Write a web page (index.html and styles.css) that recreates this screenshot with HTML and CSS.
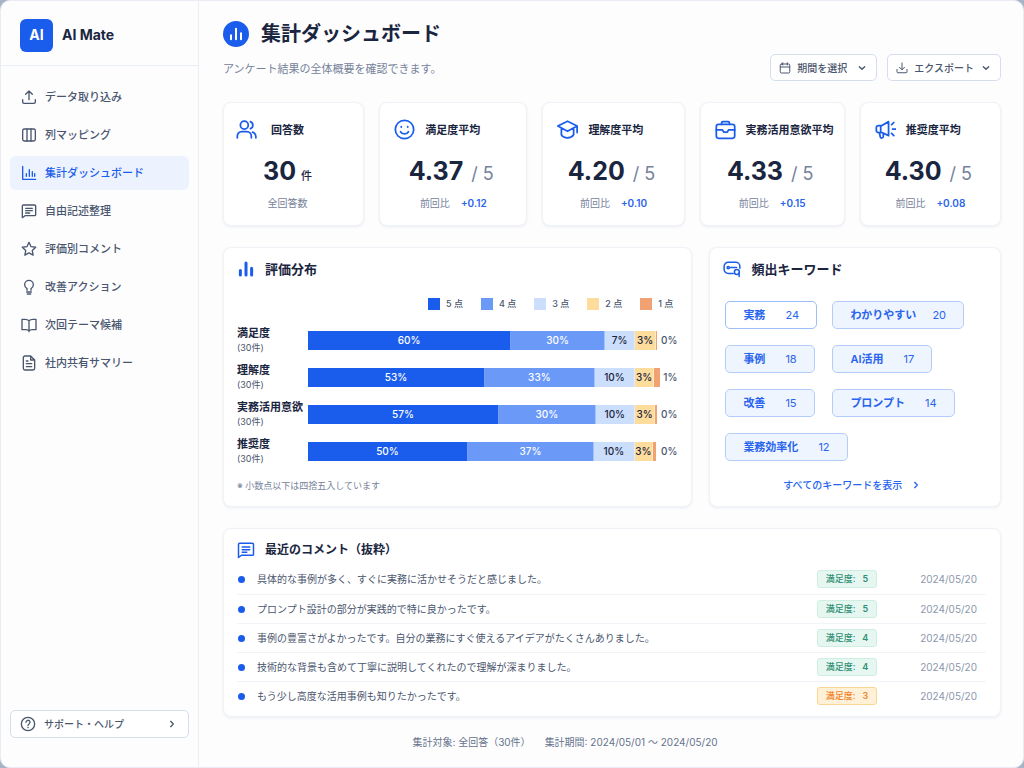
FILE: index.html
```html
<!DOCTYPE html>
<html lang="ja">
<head>
<meta charset="utf-8">
<meta name="viewport" content="width=device-width, initial-scale=1">
<title>AI Mate - 集計ダッシュボード</title>
<link rel="stylesheet" href="styles.css">
</head>
<body>
<svg class="sprite" aria-hidden="true">
  <symbol id="i-upload" viewBox="0 0 24 24"><path d="M12 16V3M7 8l5-5 5 5M2.500 16v3.500a2 2 0 0 0 2 2h15a2 2 0 0 0 2-2V16"/></symbol>
  <symbol id="i-columns" viewBox="0 0 24 24"><rect x="2.500" y="3" width="19" height="18" rx="2.500"/><path d="M9 3v18M15 3v18"/></symbol>
  <symbol id="i-chart" viewBox="0 0 24 24"><path d="M2.500 2v19.500H22M8 17v-4M12.500 17V7M17 17v-7M20.500 17v-4"/></symbol>
  <symbol id="i-message" viewBox="0 0 24 24"><path d="M2 22V4.500A1.500 1.500 0 0 1 3.500 3h17A1.500 1.500 0 0 1 22 4.500v13a1.500 1.500 0 0 1-1.500 1.500H6zM7 8h10M7 11.500h10M7 15h6"/></symbol>
  <symbol id="i-star" viewBox="0 0 24 24"><path d="m12 2 3.100 6.500 7 .900-5.200 4.900 1.300 7-6.200-3.400-6.200 3.400 1.300-7L1.900 9.400l7-.900z"/></symbol>
  <symbol id="i-bulb" viewBox="0 0 24 24"><path d="M9 17v-2.500c-2-1.300-3.500-3.300-3.500-6a6.500 6.500 0 0 1 13 0c0 2.700-1.500 4.700-3.500 6V17M8.500 19.500h7M9.500 22.500h5"/></symbol>
  <symbol id="i-book" viewBox="0 0 24 24"><path d="M12 5.500C10.500 4 8.500 3.500 6 3.500H1.500V19H7c2.500 0 4 .500 5 2 1-1.500 2.500-2 5-2h5.500V3.500H18c-2.500 0-4.500.500-6 2zM12 5.500V22"/></symbol>
  <symbol id="i-file" viewBox="0 0 24 24"><path d="M14.500 1.500H6A2.500 2.500 0 0 0 3.500 4v16A2.500 2.500 0 0 0 6 22.500h12a2.500 2.500 0 0 0 2.500-2.500V7.500zM14.500 1.500v6h6M8 9h2.500M8 13h8M8 17.500h8"/></symbol>
  <symbol id="i-help" viewBox="0 0 24 24"><circle cx="12" cy="12" r="10"/><path d="M9 9.500a3 3 0 1 1 4.500 2.500c-1 .600-1.500 1.100-1.500 2.200M12 17.200v.300"/></symbol>
  <symbol id="i-right" viewBox="0 0 24 24"><path d="m8 4 8 8-8 8"/></symbol>
  <symbol id="i-down" viewBox="0 0 24 24"><path d="m4 8 8 8 8-8"/></symbol>
  <symbol id="i-bars" viewBox="0 0 24 24"><path d="M4.500 20v-6M12 20V4M19.500 20v-9"/></symbol>
  <symbol id="i-calendar" viewBox="0 0 24 24"><rect x="2.500" y="4" width="19" height="18" rx="2.500"/><path d="M2.500 10h19M7.500 1.500V6M16.500 1.500V6"/></symbol>
  <symbol id="i-download" viewBox="0 0 24 24"><path d="M12 2v13M7 10.500l5 5 5-5M2 15v4.500a2 2 0 0 0 2 2h16a2 2 0 0 0 2-2V15"/></symbol>
  <symbol id="i-users" viewBox="0 0 24 24"><circle cx="9.500" cy="7" r="4.500"/><path d="M1.500 21.500v-2a5 5 0 0 1 5-5h6a5 5 0 0 1 5 5v2M16.500 3a4.300 4.300 0 0 1 0 8M19 15c2.300.800 3.700 2.600 3.700 5v1.500"/></symbol>
  <symbol id="i-smile" viewBox="0 0 24 24"><circle cx="12" cy="12" r="10.500"/><path d="M7.500 14.500c1 1.700 2.600 2.600 4.500 2.600s3.500-.900 4.500-2.600M8.300 8.800v.400M15.700 8.800v.400"/></symbol>
  <symbol id="i-cap" viewBox="0 0 24 24"><path d="M12 2.500 1 8l11 6 11-6zM23 8v7.500M5 11v7c1.500 2.500 4 3.500 7 3.500s5.500-1 7-3.500v-7"/></symbol>
  <symbol id="i-case" viewBox="0 0 24 24"><rect x="1.500" y="6" width="21" height="16" rx="2.500"/><path d="M7.500 6V4.500A1.500 1.500 0 0 1 9 3h6a1.500 1.500 0 0 1 1.500 1.500V6M1.500 12.500h7l1.500 2.500h4l1.500-2.500h7"/></symbol>
  <symbol id="i-horn" viewBox="0 0 24 24"><path d="M15.500 3v16L8 15.500H4A2.500 2.500 0 0 1 1.500 13v-3A2.500 2.500 0 0 1 4 7.500h4zM6.500 8v7M5 15.500l1 5a1.800 1.800 0 0 0 3.500-.500v-4M19 6.500 21.500 4M20 11.500h3.500M19 16.500l2.500 2.500"/></symbol>
  <symbol id="i-key" viewBox="0 0 24 24"><path d="M13.500 18H7a5.500 5.500 0 0 1-5.500-5.500V8.500A5.500 5.500 0 0 1 7 3h10a5.500 5.500 0 0 1 5.500 5.500V11"/><circle cx="7" cy="10" r="1.500"/><path d="M9 10h9"/><circle cx="18.500" cy="16" r="3.300"/><path d="M21.500 17v5"/></symbol>
</svg>

<div class="app">
  <aside class="sidebar">
    <div class="brand"><span class="brand__logo">AI</span><span>AI Mate</span></div>
    <nav class="nav" aria-label="メインメニュー">
      <a class="nav__item" href="#import"><svg class="icon"><use href="#i-upload"/></svg>データ取り込み</a>
      <a class="nav__item" href="#mapping"><svg class="icon"><use href="#i-columns"/></svg>列マッピング</a>
      <a class="nav__item nav__item--active" href="#dashboard" aria-current="page"><svg class="icon"><use href="#i-chart"/></svg>集計ダッシュボード</a>
      <a class="nav__item" href="#free"><svg class="icon"><use href="#i-message"/></svg>自由記述整理</a>
      <a class="nav__item" href="#ratings"><svg class="icon"><use href="#i-star"/></svg>評価別コメント</a>
      <a class="nav__item" href="#actions"><svg class="icon"><use href="#i-bulb"/></svg>改善アクション</a>
      <a class="nav__item" href="#themes"><svg class="icon"><use href="#i-book"/></svg>次回テーマ候補</a>
      <a class="nav__item" href="#summary"><svg class="icon"><use href="#i-file"/></svg>社内共有サマリー</a>
    </nav>
    <button class="support" type="button"><svg class="icon"><use href="#i-help"/></svg><span class="support__text">サポート・ヘルプ</span><svg class="icon icon--chevron"><use href="#i-right"/></svg></button>
  </aside>

  <main class="main" id="dashboard">
    <header class="header">
      <div class="header__text">
        <h1 class="title"><span class="title__badge"><svg class="icon icon--title"><use href="#i-bars"/></svg></span>集計ダッシュボード</h1>
        <p class="subtitle">アンケート結果の全体概要を確認できます。</p>
      </div>
      <div class="actions">
        <label class="control"><svg class="icon icon--small"><use href="#i-calendar"/></svg><select class="control__select" aria-label="期間"><option>期間を選択</option></select><svg class="icon icon--chevron"><use href="#i-down"/></svg></label>
        <button class="control" type="button"><svg class="icon icon--small"><use href="#i-download"/></svg><span>エクスポート</span><svg class="icon icon--chevron"><use href="#i-down"/></svg></button>
      </div>
    </header>

    <section class="kpis" aria-label="指標">
      <article class="card kpi kpi--count">
        <h2 class="kpi__head"><svg class="icon icon--large"><use href="#i-users"/></svg>回答数</h2>
        <p class="kpi__value">30<span class="kpi__unit">件</span></p>
        <p class="kpi__note">全回答数</p>
      </article>
      <article class="card kpi">
        <h2 class="kpi__head"><svg class="icon icon--large"><use href="#i-smile"/></svg>満足度平均</h2>
        <p class="kpi__value">4.37<span class="kpi__max">/ 5</span></p>
        <p class="kpi__note">前回比<span class="kpi__delta">+0.12</span></p>
      </article>
      <article class="card kpi">
        <h2 class="kpi__head"><svg class="icon icon--large"><use href="#i-cap"/></svg>理解度平均</h2>
        <p class="kpi__value">4.20<span class="kpi__max">/ 5</span></p>
        <p class="kpi__note">前回比<span class="kpi__delta">+0.10</span></p>
      </article>
      <article class="card kpi">
        <h2 class="kpi__head"><svg class="icon icon--large"><use href="#i-case"/></svg>実務活用意欲平均</h2>
        <p class="kpi__value">4.33<span class="kpi__max">/ 5</span></p>
        <p class="kpi__note">前回比<span class="kpi__delta">+0.15</span></p>
      </article>
      <article class="card kpi">
        <h2 class="kpi__head"><svg class="icon icon--large"><use href="#i-horn"/></svg>推奨度平均</h2>
        <p class="kpi__value">4.30<span class="kpi__max">/ 5</span></p>
        <p class="kpi__note">前回比<span class="kpi__delta">+0.08</span></p>
      </article>
    </section>

    <div class="panels">
      <section class="card panel">
        <h2 class="panel__title"><svg class="icon icon--panel icon--bold"><use href="#i-bars"/></svg>評価分布</h2>
        <ul class="legend">
          <li class="legend__item"><span class="swatch s5"></span>5 点</li>
          <li class="legend__item"><span class="swatch s4"></span>4 点</li>
          <li class="legend__item"><span class="swatch s3"></span>3 点</li>
          <li class="legend__item"><span class="swatch s2"></span>2 点</li>
          <li class="legend__item"><span class="swatch s1"></span>1 点</li>
        </ul>
        <div class="chart">
          <div class="row">
            <div class="row__label">満足度<span class="row__count">(30件)</span></div>
            <div class="track"><span class="seg s5" style="width:57.6%">60%</span><span class="seg s4" style="width:26.8%">30%</span><span class="seg s3" style="width:8.4%">7%</span><span class="seg s2" style="width:6%">3%</span><span class="seg s1" style="width:.3%"></span></div>
            <span class="row__end">0%</span>
          </div>
          <div class="row">
            <div class="row__label">理解度<span class="row__count">(30件)</span></div>
            <div class="track"><span class="seg s5" style="width:50.2%">53%</span><span class="seg s4" style="width:31.2%">33%</span><span class="seg s3" style="width:11.4%">10%</span><span class="seg s2" style="width:5.500%">3%</span><span class="seg s1" style="width:1.700%"></span></div>
            <span class="row__end">1%</span>
          </div>
          <div class="row">
            <div class="row__label">実務活用意欲<span class="row__count">(30件)</span></div>
            <div class="track"><span class="seg s5" style="width:54.2%">57%</span><span class="seg s4" style="width:27.4%">30%</span><span class="seg s3" style="width:11.2%">10%</span><span class="seg s2" style="width:5.800%">3%</span><span class="seg s1" style="width:.5%"></span></div>
            <span class="row__end">0%</span>
          </div>
          <div class="row">
            <div class="row__label">推奨度<span class="row__count">(30件)</span></div>
            <div class="track"><span class="seg s5" style="width:45.4%">50%</span><span class="seg s4" style="width:35.8%">37%</span><span class="seg s3" style="width:11.500%">10%</span><span class="seg s2" style="width:5.200%">3%</span><span class="seg s1" style="width:.9%"></span></div>
            <span class="row__end">0%</span>
          </div>
        </div>
        <p class="footnote">※ 小数点以下は四捨五入しています</p>
      </section>

      <section class="card panel">
        <h2 class="panel__title"><svg class="icon icon--panel"><use href="#i-key"/></svg>頻出キーワード</h2>
        <div class="keywords">
          <button class="keyword keyword--selected" type="button" aria-pressed="true">実務<span class="keyword__count">24</span></button>
          <button class="keyword keyword--tight" type="button">わかりやすい<span class="keyword__count">20</span></button>
          <button class="keyword" type="button">事例<span class="keyword__count">18</span></button>
          <button class="keyword" type="button">AI活用<span class="keyword__count">17</span></button>
          <button class="keyword" type="button">改善<span class="keyword__count">15</span></button>
          <button class="keyword" type="button">プロンプト<span class="keyword__count">14</span></button>
          <button class="keyword keyword--wide" type="button">業務効率化<span class="keyword__count">12</span></button>
        </div>
        <a class="more" href="#keywords">すべてのキーワードを表示<svg class="icon icon--chevron"><use href="#i-right"/></svg></a>
      </section>
    </div>

    <section class="card comments">
      <h2 class="panel__title panel__title--compact"><svg class="icon icon--panel"><use href="#i-message"/></svg>最近のコメント（抜粋）</h2>
      <ul class="comments__list">
        <li class="comment"><span class="comment__text">具体的な事例が多く、すぐに実務に活かせそうだと感じました。</span><span class="score">満足度:<b class="score__num">5</b></span><time class="comment__date" datetime="2024-05-20">2024/05/20</time></li>
        <li class="comment"><span class="comment__text">プロンプト設計の部分が実践的で特に良かったです。</span><span class="score">満足度:<b class="score__num">5</b></span><time class="comment__date" datetime="2024-05-20">2024/05/20</time></li>
        <li class="comment"><span class="comment__text">事例の豊富さがよかったです。自分の業務にすぐ使えるアイデアがたくさんありました。</span><span class="score">満足度:<b class="score__num">4</b></span><time class="comment__date" datetime="2024-05-20">2024/05/20</time></li>
        <li class="comment"><span class="comment__text">技術的な背景も含めて丁寧に説明してくれたので理解が深まりました。</span><span class="score">満足度:<b class="score__num">4</b></span><time class="comment__date" datetime="2024-05-20">2024/05/20</time></li>
        <li class="comment"><span class="comment__text">もう少し高度な活用事例も知りたかったです。</span><span class="score score--mid">満足度:<b class="score__num">3</b></span><time class="comment__date" datetime="2024-05-20">2024/05/20</time></li>
      </ul>
    </section>

    <footer class="footer"><span>集計対象: 全回答（30件）</span><span>集計期間: 2024/05/01 〜 2024/05/20</span></footer>
  </main>
</div>
</body>
</html>
```
FILE: styles.css
```css
:root {
  --blue: #1a5ceb;
  --ink: #1a2540;
  --text: #4a566e;
  --muted: #76829a;
  --line: #eaeef5;
}

* { box-sizing: border-box; }

body {
  margin: 0;
  background: #aab3c4;
  color: var(--ink);
  font-family: Inter, "Noto Sans CJK JP", sans-serif;
  font-size: 11px;
  line-height: 16px;
}

h1, h2, p, ul { margin: 0; padding: 0; }
ul { list-style: none; }
button, select { font: inherit; color: inherit; }
button, a { cursor: pointer; }
a { text-decoration: none; }
.sprite { display: none; }

.icon {
  width: 16px;
  height: 16px;
  flex: none;
  fill: none;
  stroke: currentColor;
  stroke-width: 2;
  stroke-linecap: round;
  stroke-linejoin: round;
}
.icon--small { width: 12px; height: 12px; }
.icon--chevron { width: 8px; height: 8px; stroke-width: 4; }
.icon--title { stroke-width: 3; }
.icon--large { width: 21px; height: 21px; color: var(--blue); }
.icon--panel { width: 18px; height: 18px; color: var(--blue); }
.icon--bold { stroke-width: 4; }

.app {
  display: flex;
  min-height: 100vh;
  border: 1px solid #e9edf3;
  border-radius: 10px;
  background: #fdfdfe;
}

/* Sidebar */
.sidebar {
  display: flex;
  flex-direction: column;
  width: 198px;
  flex: none;
  border-right: 1px solid var(--line);
}
.brand {
  display: flex;
  align-items: center;
  gap: 9px;
  height: 65px;
  padding: 4px 19px 0;
  border-bottom: 1px solid var(--line);
  font-size: 14px;
  font-weight: 700;
}
.brand__logo {
  display: grid;
  place-items: center;
  width: 33px;
  height: 33px;
  border-radius: 6px;
  background: var(--blue);
  color: #fff;
}
.nav {
  display: flex;
  flex-direction: column;
  gap: 4px;
  padding: 14px 9px;
}
.nav__item {
  display: flex;
  align-items: center;
  gap: 8px;
  height: 34px;
  padding: 0 11px;
  border-radius: 6px;
  color: var(--text);
  font-weight: 500;
}
.nav__item--active { background: #edf3fe; color: var(--blue); }
.support {
  display: flex;
  align-items: center;
  gap: 8px;
  height: 28px;
  margin: auto 9px 29px;
  padding: 0 12px 0 9px;
  border: 1px solid #d5deeb;
  border-radius: 5px;
  background: #fff;
  color: var(--text);
  font-size: 10px;
  font-weight: 500;
}
.support__text { flex: 1; text-align: left; }

/* Page header */
.main {
  display: flex;
  flex-direction: column;
  flex: 1;
  min-width: 0;
  padding: 20px 22px 16px 24px;
}
.header {
  display: flex;
  justify-content: space-between;
  align-items: flex-end;
}
.header__text { padding-bottom: 4px; }
.title {
  display: flex;
  align-items: center;
  gap: 12px;
  font-size: 20px;
  font-weight: 700;
  line-height: 26px;
}
.title__badge {
  display: grid;
  place-items: center;
  width: 26px;
  height: 26px;
  border-radius: 50%;
  background: var(--blue);
  color: #fff;
}
.subtitle { margin-top: 14px; color: var(--muted); }
.actions { display: flex; gap: 10px; }
.control {
  display: flex;
  align-items: center;
  gap: 6px;
  height: 27px;
  padding: 0 10px 0 8px;
  border: 1px solid #d5deeb;
  border-radius: 5px;
  background: #fff;
  color: var(--text);
  font-size: 10px;
  font-weight: 500;
}
.control .icon--chevron { margin-left: 2px; }
.control__select {
  appearance: none;
  padding: 0 3px 0 0;
  border: 0;
  background: none;
}

/* Cards */
.card {
  border: 1px solid #eff2f7;
  border-radius: 8px;
  background: #fff;
  box-shadow: 0 1px 3px rgba(30, 50, 90, .08);
}
.kpis {
  display: grid;
  grid-template-columns: 142fr 149fr 143fr 146fr 142fr;
  gap: 15px;
  margin-top: 21px;
}
.kpi {
  display: flex;
  flex-direction: column;
  height: 124px;
  padding-top: 16px;
}
.kpi--count { padding-right: 12px; }
.kpi--count .kpi__head { gap: 14px; padding-left: 12px; }
.kpi__head {
  display: flex;
  align-items: center;
  gap: 10px;
  padding-left: 14px;
  font-size: 11px;
  font-weight: 600;
  white-space: nowrap;
}
.kpi__value {
  display: flex;
  justify-content: center;
  align-items: baseline;
  gap: 8px;
  height: 34px;
  margin-top: 14px;
  padding-right: 4px;
  font-size: 25px;
  font-weight: 700;
  line-height: 34px;
}
.kpi__unit { font-size: 11px; font-weight: 500; }
.kpi--count .kpi__value { gap: 5px; padding-right: 0; }
.kpi__max { color: var(--muted); font-size: 18px; font-weight: 400; }
.kpi__note {
  display: flex;
  justify-content: center;
  gap: 11px;
  margin-top: 7px;
  color: var(--muted);
  font-size: 10px;
}
.kpi__delta { color: #2864ee; font-weight: 600; }

.panels {
  display: grid;
  grid-template-columns: 470fr 292fr;
  gap: 17px;
  margin-top: 21px;
}
.panel {
  display: flex;
  flex-direction: column;
  height: 260px;
  padding: 12px 14px 12px 13px;
}
.panel__title {
  display: flex;
  align-items: center;
  gap: 10px;
  font-size: 13px;
  line-height: 18px;
}
.panel__title--compact { font-size: 12px; }

.s5 { background: var(--blue); color: #fff; }
.s4 { background: #6b99f8; color: #fff; }
.s3 { background: #cbdefb; }
.s2 { background: #fddc9c; }
.s1 { background: #f2a272; }

.legend {
  display: flex;
  justify-content: flex-end;
  gap: 18px;
  margin: 18px 4px 0 0;
  color: var(--text);
  font-size: 9px;
  font-weight: 500;
  line-height: 16px;
}
.legend__item { display: flex; align-items: center; gap: 6px; }
.swatch { width: 12px; height: 12px; }
.chart {
  display: flex;
  flex-direction: column;
  gap: 7px;
  margin-top: 13px;
}
.row { display: flex; align-items: center; height: 30px; }
.row__label {
  width: 71px;
  flex: none;
  font-weight: 600;
  line-height: 15px;
  white-space: nowrap;
}
.row__count {
  display: block;
  color: var(--text);
  font-size: 9px;
  font-weight: 400;
  line-height: 14px;
}
.track { display: flex; flex: 1; height: 19px; }
.seg {
  display: grid;
  place-items: center;
  border-right: 1px solid rgba(255, 255, 255, .4);
  font-size: 10px;
  font-weight: 500;
}
.seg:last-child { border-right: 0; }
.row__end {
  width: 17px;
  color: var(--text);
  font-size: 10px;
  font-weight: 500;
  text-align: right;
}
.footnote { margin-top: 12px; color: var(--muted); font-size: 9px; }

.keywords {
  display: grid;
  grid-template-columns: 92px 1fr;
  gap: 16px 15px;
  justify-items: start;
  margin: 23px 1px 0 2px;
}
.keyword {
  display: flex;
  align-items: center;
  justify-content: space-between;
  gap: 20px;
  height: 28px;
  padding: 0 17px;
  border: 1px solid #b3cdfb;
  border-radius: 5px;
  background: #eff5fe;
  color: #2864ee;
  font-weight: 600;
  white-space: nowrap;
}
.keyword--selected { border-color: #9dbefa; background: #fff; }
.keyword--tight { gap: 16px; }
.keyword--wide { grid-column: 1 / -1; }
.keyword__count { font-weight: 400; }
.more {
  display: flex;
  align-items: center;
  justify-content: center;
  gap: 10px;
  margin-top: 16px;
  padding-right: 6px;
  color: #2864ee;
  font-size: 10px;
  font-weight: 500;
}

/* Comments */
.comments {
  height: 189px;
  margin-top: 21px;
  padding: 12px 14px 0 13px;
}
.comments__list { margin-top: 5px; }
.comment {
  display: flex;
  align-items: center;
  height: 30px;
  color: var(--text);
  font-size: 10px;
}
.comment + .comment { height: 29px; border-top: 1px solid #f0f3f8; }
.comment::before {
  width: 7px;
  height: 7px;
  flex: none;
  margin: 0 12px 0 1px;
  border-radius: 50%;
  background: var(--blue);
  content: "";
}
.comment__text { flex: 1; }
.score {
  display: flex;
  justify-content: center;
  align-items: center;
  gap: 7px;
  width: 60px;
  height: 18px;
  border: 1px solid #cfeee2;
  border-radius: 3px;
  background: #e6f7f1;
  color: #2f8f74;
  font-size: 9px;
  font-weight: 500;
}
.score--mid { border-color: #fbd592; background: #fff1d8; color: #f0832b; }
.score__num { font-weight: 600; }
.comment__date {
  width: 109px;
  padding-right: 9px;
  color: #8b97ab;
  font-size: 10px;
  text-align: right;
}

.footer {
  display: flex;
  justify-content: center;
  gap: 14px;
  margin-top: 17px;
  padding-right: 94px;
  color: #66738c;
  font-size: 10px;
}
```
